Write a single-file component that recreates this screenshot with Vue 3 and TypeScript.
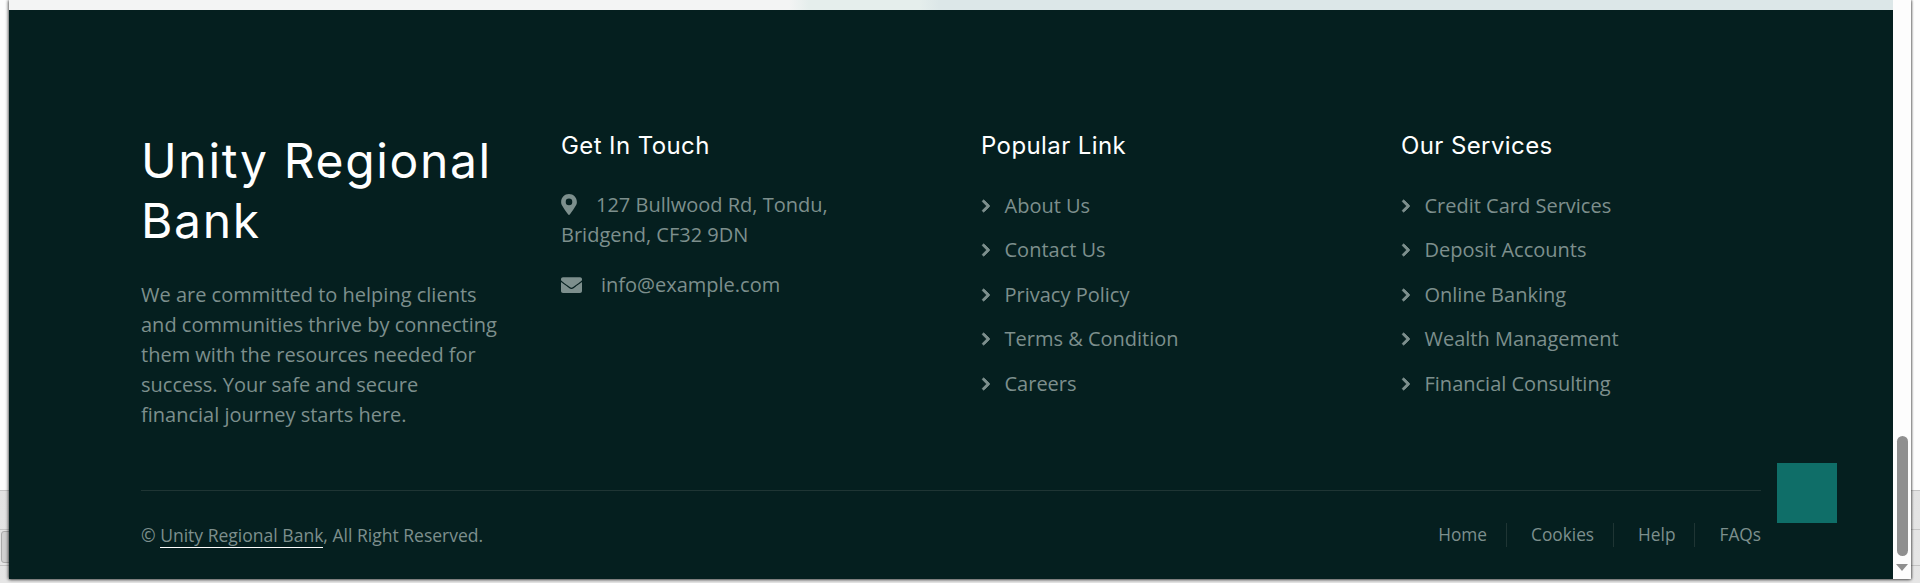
<script setup lang="ts">
const popular: string[] = ['About Us', 'Contact Us', 'Privacy Policy', 'Terms & Condition', 'Careers']
const services: string[] = ['Credit Card Services', 'Deposit Accounts', 'Online Banking', 'Wealth Management', 'Financial Consulting']
const bottom: string[] = ['Home', 'Cookies', 'Help', 'FAQs']
const columns = [
  { title: 'Popular Link', links: popular },
  { title: 'Our Services', links: services },
]
</script>

<template>
  <div class="screen">
    <div class="backdrop-line l1"></div>
    <div class="backdrop-line l2"></div>
    <div class="backdrop-line l3"></div>
    <div class="backdrop-btn"></div>
    <div class="window">
      <div class="page">
        <div class="top-strip"></div>
        <footer class="footer">
          <div class="columns">
            <div class="col">
              <h2 class="brand">Unity Regional Bank</h2>
              <p class="about">We are committed to helping clients and communities thrive by connecting them with the resources needed for success. Your safe and secure financial journey starts here.</p>
            </div>
            <div class="col">
              <h4 class="title">Get In Touch</h4>
              <p class="address">
                <svg class="pin" viewBox="0 0 384 512" aria-hidden="true"><path d="M172.3 501.7C27 291 0 256 0 192 0 86 86 0 192 0s192 86 192 192c0 64-27 99-172.300 309.700-9.500 13.700-29.900 13.700-39.400 0zM192 272a80 80 0 1 0 0-160 80 80 0 0 0 0 160z"/></svg>127 Bullwood Rd, Tondu, Bridgend, CF32 9DN
              </p>
              <p class="mail">
                <svg class="env" viewBox="0 0 512 384" aria-hidden="true"><path d="M502.300 126.800c3.900-3.100 9.700-.2 9.700 4.700V336c0 26.500-21.500 48-48 48H48c-26.500 0-48-21.500-48-48V131.600c0-5 5.700-7.800 9.700-4.700 22.400 17.400 52.100 39.500 154.100 113.600 21.100 15.400 56.700 47.800 92.200 47.600 35.700.3 72-32.800 92.300-47.600 102-74.100 131.600-96.300 154-113.700zM256 256c23.200.4 56.600-29.200 73.400-41.400 132.700-96.300 142.800-104.700 173.400-128.700 5.800-4.500 9.200-11.500 9.200-18.900V48c0-26.500-21.500-48-48-48H48C21.500 0 0 21.500 0 48v19c0 7.400 3.400 14.300 9.200 18.900 30.600 23.900 40.700 32.400 173.400 128.700 16.800 12.200 50.200 41.800 73.400 41.400z"/></svg>info@example.com
              </p>
            </div>
            <div v-for="column in columns" :key="column.title" class="col">
              <h4 class="title">{{ column.title }}</h4>
              <ul class="links">
                <li v-for="link in column.links" :key="link">
                  <svg class="chev" viewBox="0 0 320 512" aria-hidden="true"><path d="M285.500 273L91.100 467.300c-9.400 9.400-24.600 9.400-33.900 0l-22.700-22.700c-9.400-9.400-9.400-24.500 0-33.900L188.500 256 34.500 101.300c-9.300-9.400-9.300-24.500 0-33.900l22.700-22.700c9.400-9.400 24.600-9.400 33.900 0L285.500 239c9.400 9.400 9.400 24.600 0 34z"/></svg>
                  <span>{{ link }}</span>
                </li>
              </ul>
            </div>
          </div>
          <div class="bottom">
            <div class="copy">© <a class="copy-link">Unity Regional Bank</a>, All Right Reserved.</div>
            <nav class="menu">
              <a v-for="item in bottom" :key="item">{{ item }}</a>
            </nav>
          </div>
          <div class="to-top"></div>
        </footer>
      </div>
      <div class="scrollbar">
        <div class="track">
          <div class="thumb"></div>
        </div>
        <div class="arrow"></div>
      </div>
    </div>
  </div>
</template>

<style>
html, body { margin: 0; padding: 0; background: #e6e6e6; overflow: hidden; }
</style>

<style scoped>
.screen {
  position: relative;
  width: 1920px;
  height: 583px;
  background: linear-gradient(180deg, #fdfdfd 0, #fdfdfd 490px, #e2e2e2 490px, #e6e6e6 100%);
  overflow: hidden;
  font-family: "Open Sans", "Noto Sans", sans-serif;
}
.backdrop-line {
  position: absolute;
  left: 0;
  width: 100%;
  height: 1px;
  background: #c4c4c4;
}
.l1 { top: 490px; }
.l2 { top: 529px; }
.l3 { top: 565px; }
.backdrop-btn {
  position: absolute;
  left: 1px;
  top: 531px;
  width: 12px;
  height: 30px;
  border: 1px solid #aaa;
  border-radius: 3px;
  background: #d0d0d0;
}
.window {
  position: relative;
  display: flex;
  width: 1902px;
  height: 579px;
  margin-left: 9px;
  box-shadow: -1px 0 3px rgba(0,0,0,.45), 0 1px 3px rgba(0,0,0,.4), 1px 0 2px rgba(0,0,0,.35);
  background: #fff;
}
.page {
  position: relative;
  width: 1884px;
  display: flex;
  flex-direction: column;
}
.top-strip {
  height: 10px;
  flex: none;
  background: linear-gradient(90deg, #f3f4f4 0, #f3f4f4 780px, #e5eeec 800px, #e5eeec 910px, #dce7e8 930px, #dce7e8 100%);
}
.footer {
  flex: 1;
  background: #051f1f;
  padding: 121px 132px 0;
  box-sizing: border-box;
  position: relative;
  color: #7d8f8d;
  font-size: 20px;
  line-height: 30px;
}
.columns {
  display: grid;
  grid-template-columns: repeat(4, 420px);
  width: 1620px;
  height: 359px;
  border-bottom: 1px solid #1f3534;
}
.col { min-width: 0; }
.brand {
  margin: 0;
  width: 370px;
  color: #fff;
  font-family: Inter, "Noto Sans", sans-serif;
  font-weight: 400;
  font-size: 48px;
  line-height: 60px;
  letter-spacing: 1.650px;
}
.about {
  margin: 29px 0 0;
  width: 359px;
}
.title {
  margin: 0 0 31px;
  color: #fff;
  font-family: Inter, "Noto Sans", sans-serif;
  font-weight: 400;
  font-size: 24px;
  line-height: 29px;
  letter-spacing: 0.400px;
}
.address, .mail { margin: 0; width: 300px; }
.address { margin-top: -1px; }
.mail { margin-top: 20px; }
.pin { width: 16px; height: 21px; fill: #7d8f8d; margin-right: 19px; vertical-align: -3px; }
.env { width: 21px; height: 16px; fill: #7d8f8d; margin-right: 19px; vertical-align: -1px; }
.links { list-style: none; margin: -0.400px 0 0; padding: 0; }
.links li {
  display: flex;
  align-items: center;
  height: 30px;
  margin-bottom: 14.500px;
}
.chev { width: 10px; height: 14px; fill: #7d8f8d; stroke: #7d8f8d; stroke-width: 36px; margin-right: 13.500px; }
.bottom {
  display: flex;
  justify-content: space-between;
  width: 1620px;
  margin-top: 32px;
  font-size: 17.550px;
  line-height: 24px;
}
.copy-link {
  text-decoration: none;
  border-bottom: 1px solid #fff;
}
.menu { display: flex; font-size: 17.300px; }
.menu a { padding-right: 19px; margin-right: 24px; border-right: 1px solid #1f3534; }
.menu a:last-child { padding-right: 0; margin-right: 0; border-right: 0; }
.to-top {
  position: absolute;
  left: 1768px;
  top: 453px;
  width: 60px;
  height: 60px;
  background: #0f6e68;
}
.scrollbar {
  width: 18px;
  background: #fdfdfd;
  display: flex;
  flex-direction: column;
  align-items: center;
}
.track { flex: 1; position: relative; width: 100%; }
.thumb {
  position: absolute;
  left: 4px;
  top: 436px;
  width: 11px;
  height: 120px;
  border-radius: 6px;
  background: #8f8f8f;
}
.arrow {
  width: 0;
  height: 0;
  margin-bottom: 8px;
  border-left: 6px solid transparent;
  border-right: 6px solid transparent;
  border-top: 7px solid #8f8f8f;
}
</style>
